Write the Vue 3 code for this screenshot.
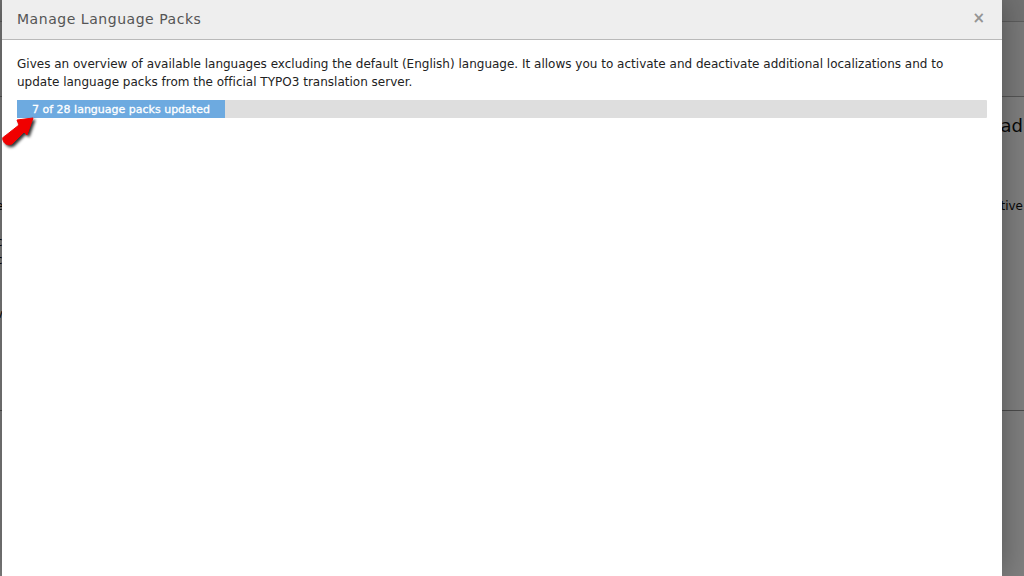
<template>
  <div class="page">
    <div class="behind">
      <div class="behind-head"></div>
      <div class="behind-body">
        <div class="behind-left">
          <span v-for="row in leftRows" :key="row.id" class="behind-row">{{ row.text }}</span>
        </div>
        <div class="behind-right">
          <div class="behind-title">Upload</div>
          <div class="behind-text">Inactive</div>
        </div>
      </div>
      <div class="behind-foot"></div>
    </div>
    <div class="backdrop"></div>
    <div class="modal">
      <div class="modal-header">
        <h4 class="modal-title">Manage Language Packs</h4>
        <span class="modal-close">×</span>
      </div>
      <div class="modal-body">
        <p class="intro">
          Gives an overview of available languages excluding the default (English) language. It allows you to activate and deactivate additional localizations and to update language packs from the official TYPO3 translation server.
        </p>
        <div class="progress">
          <div class="progress-bar" :style="{ width: barWidth + 'px' }">{{ done }} of {{ total }} language packs updated</div>
        </div>
      </div>
      <svg class="arrow" width="40" height="40" viewBox="0 0 40 40">
        <path class="arrow-fill" d="M17 7 L33 5 L27 22 L24 19 L12 31 C8 33 4 31 3 27 C2 25 3 24 5 23 L19 12 Z" />
      </svg>
    </div>
  </div>
</template>

<script setup>
const done = 7
const total = 28
const barWidth = 208
const leftRows = [
  { id: 1, text: "e" },
  { id: 2, text: "i" },
  { id: 3, text: "c" },
  { id: 4, text: "c" },
  { id: 5, text: "l" },
  { id: 6, text: "(" },
  { id: 7, text: "v" }
]
</script>

<style>
html,
body {
  margin: 0;
  overflow: hidden;
}
</style>

<style scoped>
.page {
  position: relative;
  width: 1024px;
  height: 576px;
  overflow: hidden;
  background: #fff;
  font-family: "DejaVu Sans", Verdana, sans-serif;
}

.behind {
  height: 100%;
  display: flex;
  flex-direction: column;
  color: #111;
}

.behind-head {
  height: 97px;
  flex-shrink: 0;
  box-sizing: border-box;
  border-bottom: 1px solid #aaa;
  background: linear-gradient(#e4e4e4 21px, #bbb 21px, #bbb 22px, #f4f4f4 22px);
}

.behind-body {
  display: flex;
  justify-content: space-between;
  height: 313px;
}

.behind-left {
  display: flex;
  flex-direction: column;
  margin-top: 100px;
  margin-left: -4px;
  font-size: 12px;
  line-height: 18px;
}

.behind-row {
  display: block;
}

.behind-right {
  width: 48px;
  white-space: nowrap;
  text-align: right;
  margin-right: 1px;
}

.behind-title {
  font-size: 18px;
  line-height: 24px;
  margin-top: 17px;
  direction: rtl;
}

.behind-text {
  font-size: 12px;
  line-height: 16px;
  margin-top: 60px;
  direction: rtl;
}

.behind-foot {
  border-top: 1px solid #999;
}

.backdrop {
  position: absolute;
  inset: 0;
  background: rgba(0, 0, 0, 0.5);
}

.modal {
  position: absolute;
  top: 0;
  left: 2px;
  width: 1000px;
  height: 576px;
  background: #fff;
  box-shadow: 0 0 30px rgba(0, 0, 0, 0.35);
}

.modal-header {
  display: flex;
  align-items: center;
  justify-content: space-between;
  box-sizing: border-box;
  height: 40px;
  padding: 0 17px 2px 15px;
  background: #eee;
  border-bottom: 1px solid #b9b9b9;
}

.modal-title {
  margin: 0;
  font-size: 14px;
  font-weight: 400;
  color: #555;
  letter-spacing: 0.54px;
}

.modal-close {
  font-size: 15px;
  font-weight: 700;
  line-height: 1;
  color: #949494;
}

.modal-body {
  padding: 15px 15px 0;
}

.intro {
  margin: 0 0 9px;
  font-size: 12px;
  line-height: 18px;
  color: #222;
  letter-spacing: 0.005px;
}

.progress {
  height: 18px;
  background: #dedede;
  border-radius: 1px;
}

.progress-bar {
  height: 100%;
  box-sizing: border-box;
  padding-left: 15px;
  background: #6daae0;
  color: #fff;
  font-size: 11px;
  font-weight: 400;
  line-height: 19px;
  white-space: nowrap;
  -webkit-text-stroke: 0.3px #fff;
}

.arrow {
  position: absolute;
  top: 113px;
  left: -2px;
  overflow: visible;
}

.arrow-fill {
  fill: #f00000;
  stroke: #f00000;
  stroke-width: 1px;
  stroke-linejoin: round;
  filter: drop-shadow(2px 2px 1.5px rgba(0, 0, 0, 0.8));
}
</style>
